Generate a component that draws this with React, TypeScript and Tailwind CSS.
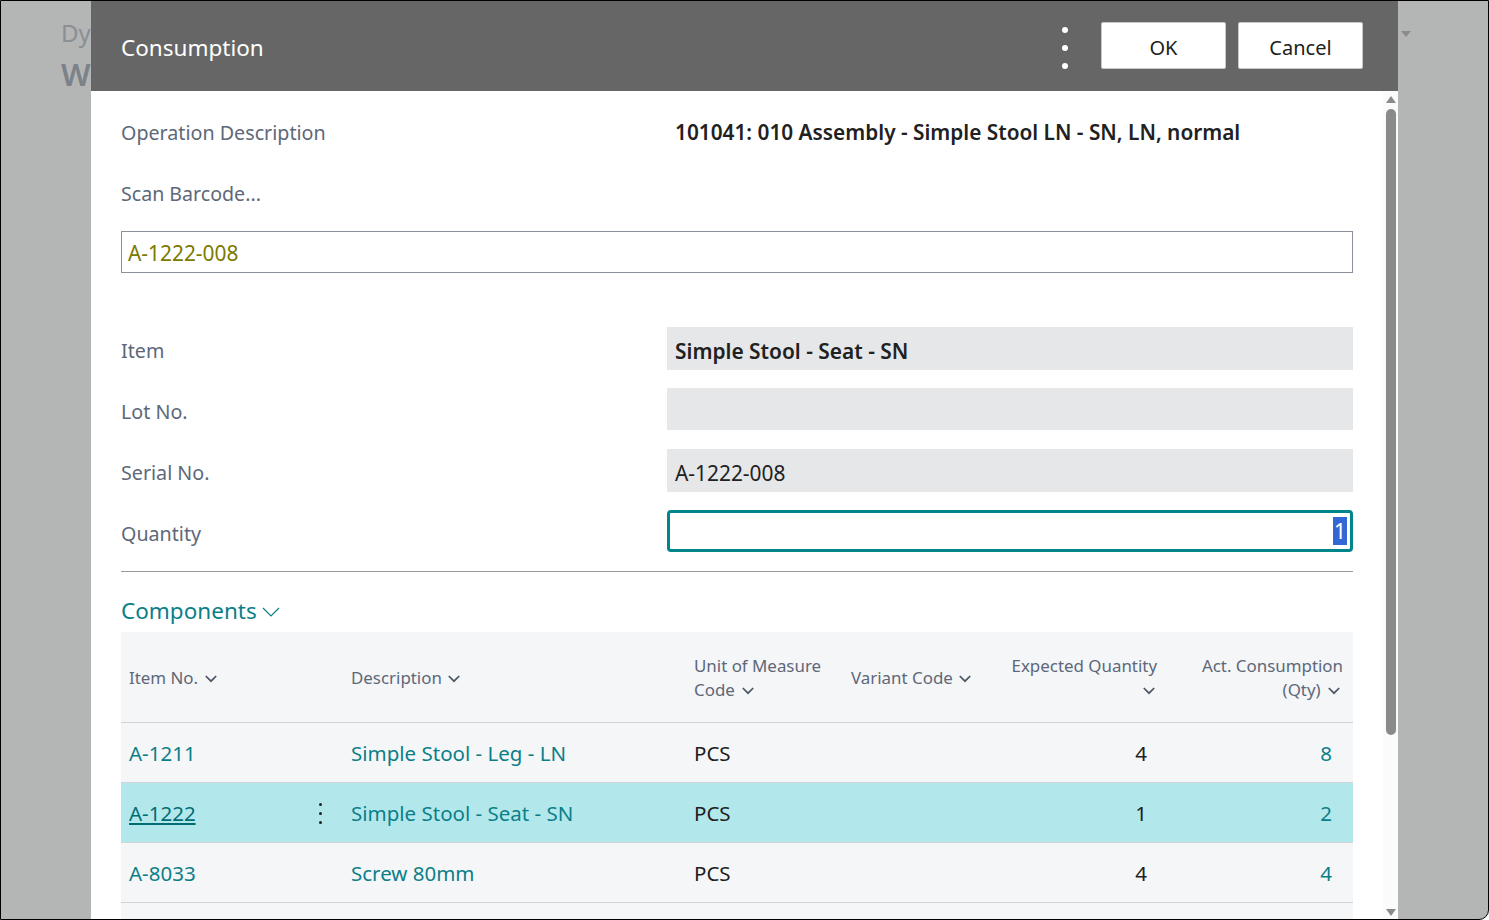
const FONT = "font-['Noto_Sans','Open_Sans',sans-serif]";

const Chevron = ({ className = "" }: { className?: string }) => (
    <svg viewBox="0 0 12 8" width="12" height="8" className={`inline-block ${className}`} fill="none" stroke="#4b5563" strokeWidth="1.7">
        <path d="M0.8 1 L6 6.2 L11.2 1" />
    </svg>
);

const FieldRow = ({ label, children, className = "" }: { label: string; children: React.ReactNode; className?: string }) => (
    <div className={`grid grid-cols-[546px_1fr] ${className}`}>
        <div className="flex items-center text-[19.7px] text-[#5d6878] pt-[5px]">{label}</div>
        {children}
    </div>
);

const ReadOnly = ({ children, bold, tall }: { children?: React.ReactNode; bold?: boolean; tall?: boolean }) => (
    <div className={`${tall ? "h-[43px]" : "h-[42px]"} bg-[#e6e7e9] px-2 pt-[6px] flex items-center text-[20.9px] text-[#212121] ${bold ? "font-semibold" : ""}`}>{children}</div>
);

const gridCols = "grid grid-cols-[222px_343px_157px_157px_170px_183px]";

const rows = [
    { no: "A-1211", desc: "Simple Stool - Leg - LN", uom: "PCS", exp: "4", act: "8" },
    { no: "A-1222", desc: "Simple Stool - Seat - SN", uom: "PCS", exp: "1", act: "2", selected: true },
    { no: "A-8033", desc: "Screw 80mm", uom: "PCS", exp: "4", act: "4" },
];

export default function App() {
    return (
        <div className={`${FONT} w-[1489px] h-[920px] overflow-hidden flex bg-[#b4b5b5] border border-black rounded-br-[10px]`}>
            {/* page behind the dialog */}
            <div className="w-[90px] shrink-0 overflow-hidden pl-[60px] pt-[15px] whitespace-nowrap">
                <div className="text-[24px] leading-[34px] text-[#8a8f94]">Dy</div>
                <div className="text-[31px] leading-[48px] font-semibold text-[#7c828a]">W</div>
            </div>

            {/* dialog */}
            <div className="w-[1307px] shrink-0 flex flex-col bg-white">
                <div className="h-[90px] shrink-0 bg-[#666666] flex items-center pl-[30px] pr-[35px]">
                    <div className="text-white text-[22.5px] pt-[4px] flex-1">Consumption</div>
                    <div className="flex flex-col gap-[12px] mr-[33px] mt-[4px]">
                        <span className="w-[6px] h-[6px] rounded-full bg-white" />
                        <span className="w-[6px] h-[6px] rounded-full bg-white" />
                        <span className="w-[6px] h-[6px] rounded-full bg-white" />
                    </div>
                    <button className="w-[125px] h-[47px] mb-[1px] pt-[5px] bg-white rounded-[2px] border border-[#c8c8c8] text-[20px] text-[#212121]">OK</button>
                    <button className="w-[125px] h-[47px] mb-[1px] pt-[5px] bg-white rounded-[2px] border border-[#c8c8c8] text-[20px] text-[#212121] ml-[12px]">Cancel</button>
                </div>

                <div className="flex-1 min-h-0 flex">
                    <div className="flex-1 min-w-0 pl-[30px] pr-[30px] overflow-hidden">
                        <div className="grid grid-cols-[554px_1fr] h-[42px] items-center mt-[21px]">
                            <div className="text-[19.7px] text-[#5d6878]">Operation Description</div>
                            <div className="text-[20.8px] font-semibold text-[#212121] whitespace-nowrap">101041: 010 Assembly - Simple Stool LN - SN, LN, normal</div>
                        </div>
                        <div className="text-[19.6px] text-[#5d6878] mt-[19px] h-[42px] flex items-center">Scan Barcode...</div>
                        <div className="mt-[16px] h-[42px] border border-[#8a919c] px-[6px] pt-[4px] flex items-center text-[20.9px] text-[#7a7a00]">A-1222-008</div>

                        <FieldRow label="Item" className="mt-[54px]"><ReadOnly bold tall>Simple Stool - Seat - SN</ReadOnly></FieldRow>
                        <FieldRow label="Lot No." className="mt-[18px]"><ReadOnly /></FieldRow>
                        <FieldRow label="Serial No." className="mt-[19px]"><ReadOnly tall>A-1222-008</ReadOnly></FieldRow>
                        <FieldRow label="Quantity" className="mt-[18px]">
                            <div className="h-[42px] border-[3px] border-[#00868a] rounded-[4px] flex items-center justify-end pr-[3px]">
                                <span className="bg-[#3367d6] text-white text-[21px] leading-[28px] px-[1px]">1</span>
                            </div>
                        </FieldRow>

                        <div className="mt-[19px] border-t border-[#9a9a9a]" />

                        <div className="mt-[23px] h-[37px] flex items-start gap-[5px] text-[22.5px] leading-[32px] text-[#0b7f88]">
                            Components
                            <svg viewBox="0 0 18 10" width="18" height="10" className="mt-[12px]" fill="none" stroke="#0b7f88" strokeWidth="1.2">
                                <path d="M1 1 L9 9 L17 1" />
                            </svg>
                        </div>

                        <div className="bg-[#f5f6f8] text-[16.9px]">
                            <div className={`${gridCols} h-[91px] pt-[2px] border-b border-[#d2d3d8] items-center text-[#5d6878] leading-[24px]`}>
                                <div className="pl-2">Item No. <Chevron className="ml-[2px]" /></div>
                                <div className="pl-2">Description <Chevron className="ml-[2px]" /></div>
                                <div className="pl-2">Unit of Measure<br />Code <Chevron className="ml-[3px]" /></div>
                                <div className="pl-2 whitespace-nowrap">Variant Code <Chevron className="ml-[2px]" /></div>
                                <div className="pr-[13px] text-right whitespace-nowrap">Expected Quantity<br /><Chevron className="mr-[2px]" /></div>
                                <div className="pr-[10px] text-right whitespace-nowrap">Act. Consumption<br />(Qty) <Chevron className="ml-[3px] mr-[3px]" /></div>
                            </div>
                            {rows.map((r) => (
                                <div key={r.no} className={`${gridCols} h-[60px] pt-[1px] border-b border-[#d2d3d8] items-center text-[20.5px] ${r.selected ? "bg-[#b2e8ec]" : ""}`}>
                                    <div className="pl-2 pr-[21px] flex items-center justify-between">
                                        <span className={r.selected ? "text-[#006d75] underline underline-offset-2" : "text-[#0b7f88]"}>{r.no}</span>
                                        {r.selected && (
                                            <span className="flex flex-col gap-[6px]">
                                                <span className="w-[3px] h-[3px] rounded-full bg-[#222]" />
                                                <span className="w-[3px] h-[3px] rounded-full bg-[#222]" />
                                                <span className="w-[3px] h-[3px] rounded-full bg-[#222]" />
                                            </span>
                                        )}
                                    </div>
                                    <div className="pl-2 text-[#0b7f88]">{r.desc}</div>
                                    <div className="pl-2 text-[#212121]">{r.uom}</div>
                                    <div />
                                    <div className="pr-[23px] text-right text-[#212121]">{r.exp}</div>
                                    <div className="pr-[21px] text-right text-[#0b7f88]">{r.act}</div>
                                </div>
                            ))}
                            <div className="h-[20px]" />
                        </div>
                    </div>

                    {/* scrollbar */}
                    <div className="w-[15px] shrink-0 bg-[#fbfbfb] flex flex-col items-center pt-[5px] pb-[3px]">
                        <span className="w-0 h-0 border-x-[5px] border-x-transparent border-b-[7px] border-b-[#8a8a8a]" />
                        <span className="mt-[6px] w-[10px] h-[626px] rounded-full bg-[#8a8a8a]" />
                        <span className="mt-auto w-0 h-0 border-x-[5px] border-x-transparent border-t-[7px] border-t-[#8a8a8a]" />
                    </div>
                </div>
            </div>

            <div className="flex-1 pl-[3px] pt-[30px]">
                <span className="block w-0 h-0 border-x-[5px] border-x-transparent border-t-[6px] border-t-[#8b8b8b]" />
            </div>
        </div>
    );
}
